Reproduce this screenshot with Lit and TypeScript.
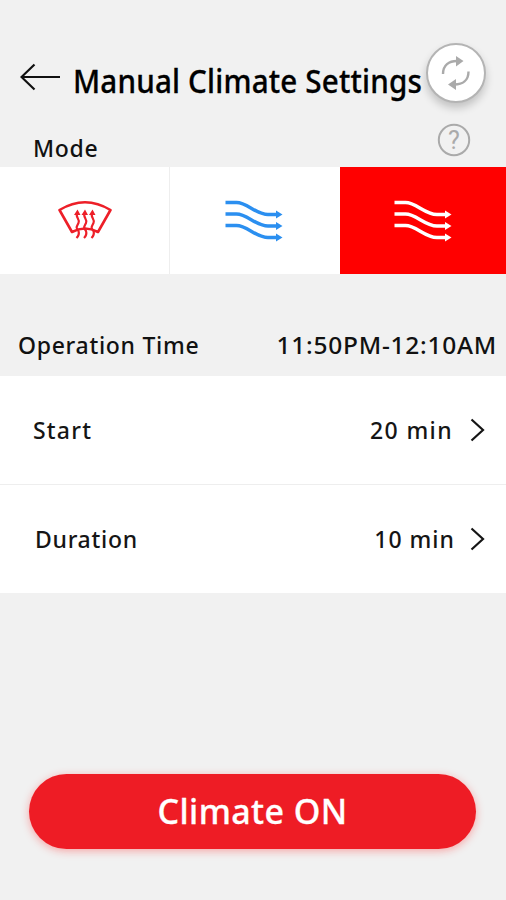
import { LitElement, html, css, svg } from "lit";
import { customElement, property } from "lit/decorators.js";

const airflow = svg`
  <g fill="none" stroke="currentColor" stroke-width="3.4">
    <path d="M.500 3.500h11C22 3.500 31 15.500 43 15.500h9" />
    <path d="M.500 15h11C22 15 31 27 43 27h9" />
    <path d="M.500 26.500h11C22 26.500 31 38.500 43 38.500h9" />
  </g>
  <g fill="currentColor">
    <path d="M51 11.500l6.500 4-6.500 4z" />
    <path d="M51 23l6.500 4-6.500 4z" />
    <path d="M51 34.500l6.500 4-6.500 4z" />
  </g>`;

@customElement("setting-row")
class SettingRow extends LitElement {
  @property() label = "";
  @property() value = "";

  static styles = css`
    :host {
      display: flex;
      align-items: center;
      box-sizing: border-box;
      height: 108px;
      padding: 0 20px 0 33px;
      background: #fff;
      font: 500 23px/32px "Noto Sans", sans-serif;
      letter-spacing: 1.2px;
      color: #151515;
    }
    :host(.duration) { padding-left: 35px; letter-spacing: 0.7px; }
    :host(.duration) .value { margin-right: 15px; letter-spacing: 1px; }
    .label { flex: 1; }
    .value { margin-right: 17px; letter-spacing: 1.4px; }
    span { margin-top: -1px; }
    svg { display: block; }
  `;

  render() {
    return html`
      <span class="label">${this.label}</span>
      <span class="value">${this.value}</span>
      <svg width="16" height="24" viewBox="0 0 16 24" fill="none" stroke="#151515" stroke-width="2.2">
        <path d="M1.500 1.500L13 12L1.500 22.500" />
      </svg>
    `;
  }
}

@customElement("app-root")
class AppRoot extends LitElement {
  static styles = css`
    :host {
      display: flex;
      flex-direction: column;
      box-sizing: border-box;
      width: 506px;
      height: 900px;
      overflow: hidden;
      background: #f1f1f1;
      color: #111;
      font: 500 23px/32px "Noto Sans", sans-serif;
      letter-spacing: 0.7px;
    }
    svg { display: block; flex: none; }
    button { border: 0; padding: 0; margin: 0; font: inherit; color: inherit; background: none; }
    .bar {
      display: flex;
      align-items: center;
      height: 66px;
      padding: 40px 20px 1px;
      box-sizing: content-box;
    }
    .back { margin: 8px 13px 0 0; }
    h1 {
      width: 353px;
      flex: none;
      margin: 16px 0 0;
      font: 500 33px/46px "Noto Sans", sans-serif;
      letter-spacing: 0.2px;
      white-space: nowrap;
      color: #000;
      -webkit-text-stroke: 0.3px #000;
    }
    .title { display: inline-block; transform-origin: 0 50%; transform: scaleX(0.897); }
    .refresh {
      display: grid;
      place-items: center;
      box-sizing: border-box;
      width: 60px;
      height: 60px;
      flex: none;
      border: 2px solid #b4b4b4;
      border-radius: 50%;
      background: #fff;
      box-shadow: 0 5px 8px rgba(0, 0, 0, 0.2);
    }
    .mode {
      display: flex;
      justify-content: space-between;
      height: 60px;
      padding: 0 35px 0 33px;
    }
    .mode .name { padding-top: 25px; }
    .help { padding-top: 16px; }
    .help svg { font: 400 25px Roboto, sans-serif; letter-spacing: 0; }
    .tabs { display: grid; grid-template-columns: 170px 170px 1fr; height: 107px; flex: none; }
    .tab { display: grid; place-items: center; background: #fff; }
    .tab svg { margin-bottom: 1px; }
    .tab.line { border-right: 1px solid #eee; }
    .tab.cold { color: #2b8ff0; padding-right: 3px; border-right: 0; }
    .tab.hot { background: #f00; color: #fff; padding-right: 1px; }
    .time {
      display: flex;
      justify-content: space-between;
      height: 102px;
      padding: 55px 9px 0 18px;
      box-sizing: border-box;
      flex: none;
    }
    .range { letter-spacing: 0.7px; transform-origin: 100% 50%; transform: scaleX(1.065); }
    .rows { display: grid; gap: 1px; background: #eee; }
    .on {
      width: 447px;
      height: 75px;
      margin: 181px 0 0 29px;
      border-radius: 38px;
      background: #ee1c25;
      color: #fff;
      font: 500 34px/73px "Noto Sans", sans-serif;
      letter-spacing: 0.4px;
      -webkit-text-stroke: 0.3px #fff;
      box-shadow: 0 2px 9px rgba(255, 50, 50, 0.4);
    }
  `;

  render() {
    return html`
      <div class="bar">
        <svg class="back" width="40" height="28" viewBox="0 0 40 28" fill="none" stroke="#111" stroke-width="2.200">
          <path d="M40 14H1.500M14.500 1.500L1.500 14l13 12.500" />
        </svg>
        <h1><span class="title">Manual Climate Settings</span></h1>
        <button class="refresh" aria-label="Refresh">
          <svg width="30" height="34" viewBox="0 0 30 34">
            <g fill="none" stroke="#aaa" stroke-width="2.400">
              <path d="M2 18C2 9 8 5 16 5" />
              <path d="M27.500 15.500c0 9-6 13-14 13" />
            </g>
            <path fill="#aaa" d="M15 0l7.500 5-7.500 5.500zM15 23l-8 5.500 8 5.500z" />
          </svg>
        </button>
      </div>
      <div class="mode">
        <span class="name">Mode</span>
        <div class="help">
          <svg width="34" height="34" viewBox="0 0 34 34">
            <circle cx="17" cy="17" r="15.200" fill="none" stroke="#aaa" stroke-width="2" />
            <text x="17" y="25.500" text-anchor="middle" fill="#aaa">?</text>
          </svg>
        </div>
      </div>
      <div class="tabs">
        <div class="tab line">
          <svg width="54" height="40" viewBox="0 0 54 40" fill="none" stroke="#ed1f28" stroke-width="2.600">
            <path d="M1.500 10Q27-5.500 52.500 10L40 32Q27 25 14 32Z" stroke-linejoin="round" />
            <g stroke-width="2.200">
              <path d="M19.500 13c-3 4 3 6 1 10s-3 4 0 8c1 3 0 5-2 7" />
              <path d="M27 13c-3 4 3 6 1 10s-3 4 0 8c1 3 0 5-2 7" />
              <path d="M34.500 13c-3 4 3 6 1 10s-3 4 0 8c1 3 0 5-2 7" />
            </g>
            <path fill="#ed1f28" stroke="none" d="M16 15l3.500-5.500 3 5.500zM23.500 15l3.500-5.500 3 5.500zM31 15l3.500-5.500 3 5.500z" />
          </svg>
        </div>
        <div class="tab cold"><svg width="58" height="43" viewBox="0 0 58 43">${airflow}</svg></div>
        <div class="tab hot"><svg width="58" height="43" viewBox="0 0 58 43">${airflow}</svg></div>
      </div>
      <div class="time"><span>Operation Time</span><span class="range">11:50PM-12:10AM</span></div>
      <div class="rows">
        <setting-row label="Start" value="20 min"></setting-row>
        <setting-row class="duration" label="Duration" value="10 min"></setting-row>
      </div>
      <button class="on">Climate ON</button>
    `;
  }
}
